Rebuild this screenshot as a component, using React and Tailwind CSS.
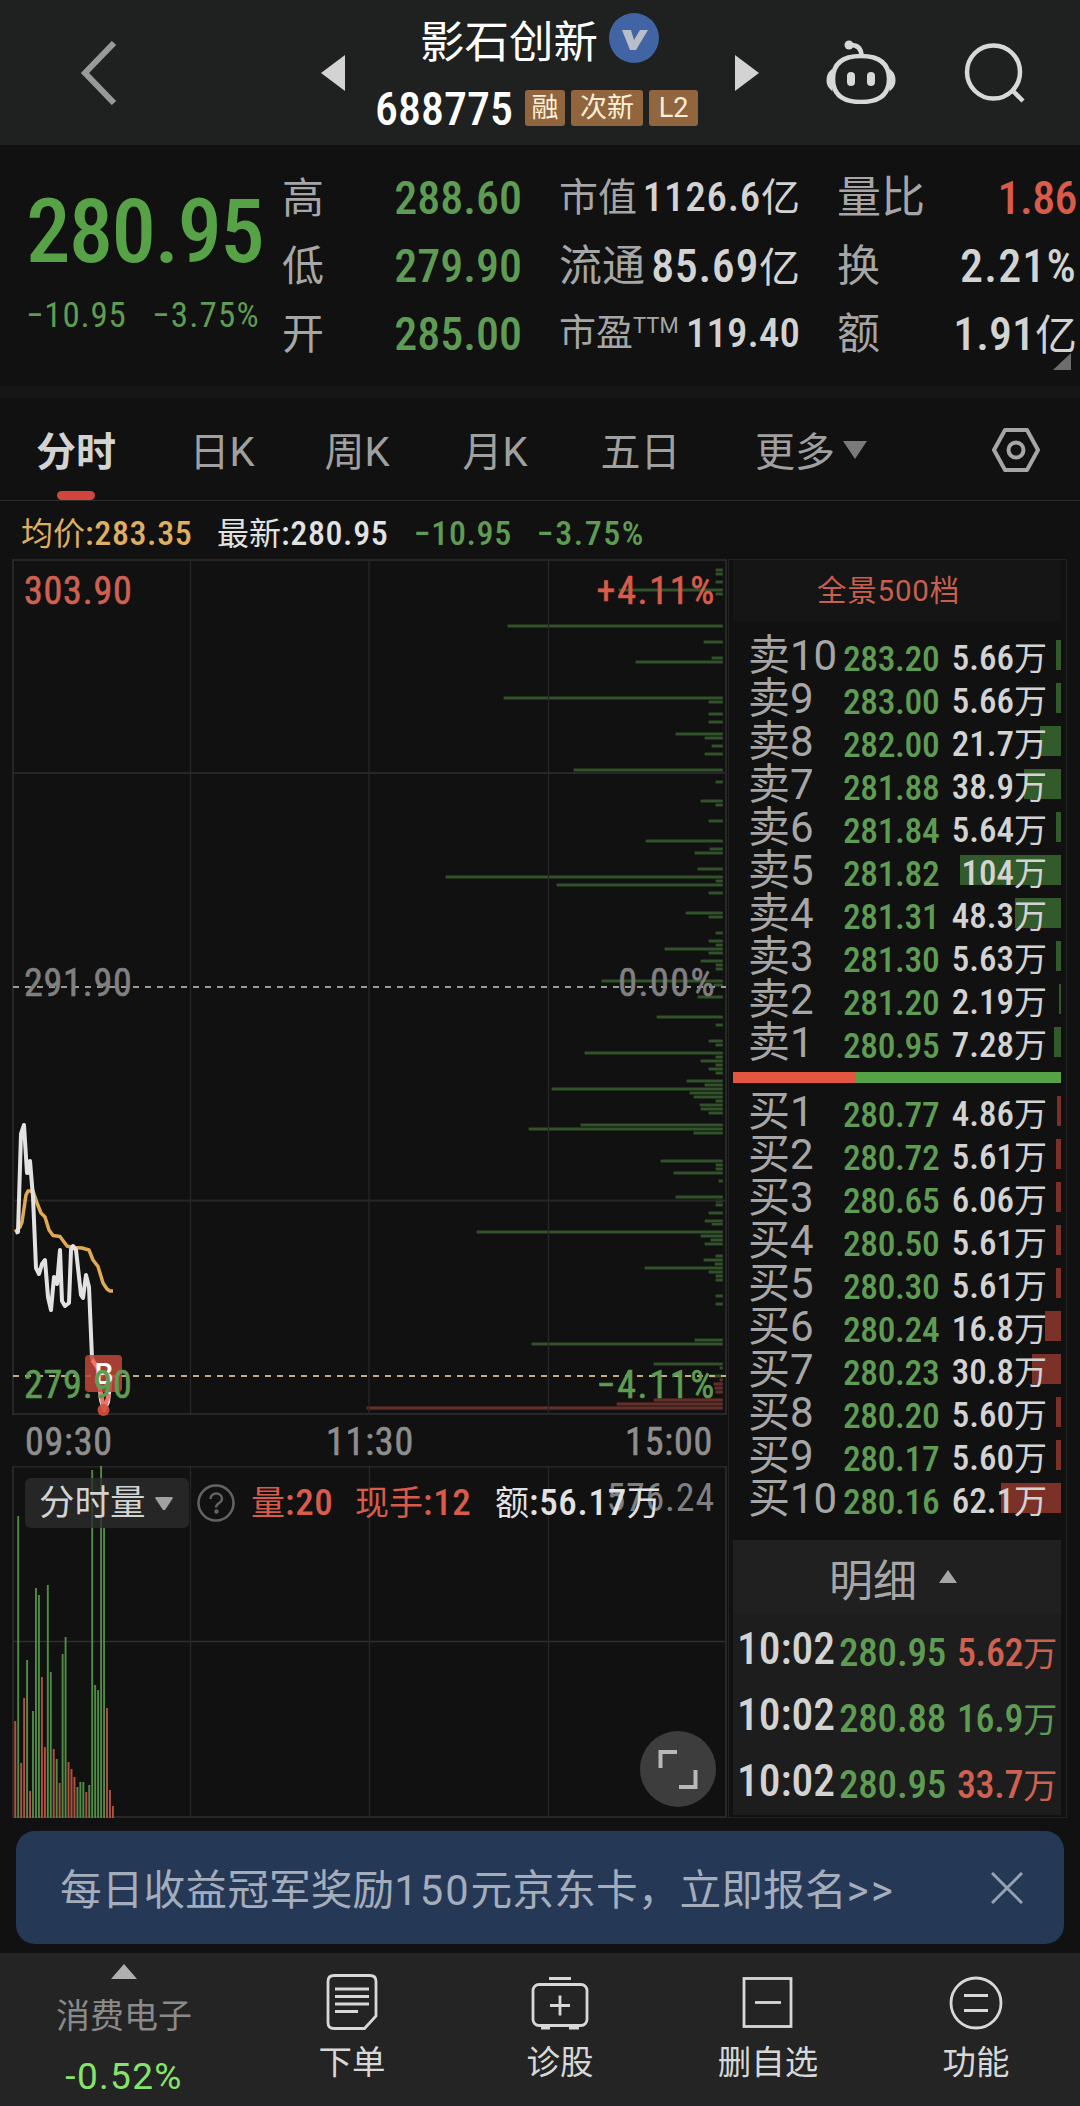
import React, { useState } from 'react';

const sells = [
  { name: '卖10', price: '283.20', vol: '5.66', bar: 5 },
  { name: '卖9', price: '283.00', vol: '5.66', bar: 5 },
  { name: '卖8', price: '282.00', vol: '21.7', bar: 21 },
  { name: '卖7', price: '281.88', vol: '38.9', bar: 37 },
  { name: '卖6', price: '281.84', vol: '5.64', bar: 5 },
  { name: '卖5', price: '281.82', vol: '104', bar: 101 },
  { name: '卖4', price: '281.31', vol: '48.3', bar: 46 },
  { name: '卖3', price: '281.30', vol: '5.63', bar: 5 },
  { name: '卖2', price: '281.20', vol: '2.19', bar: 2 },
  { name: '卖1', price: '280.95', vol: '7.28', bar: 7 },
];

const buys = [
  { name: '买1', price: '280.77', vol: '4.86', bar: 4 },
  { name: '买2', price: '280.72', vol: '5.61', bar: 5 },
  { name: '买3', price: '280.65', vol: '6.06', bar: 5 },
  { name: '买4', price: '280.50', vol: '5.61', bar: 5 },
  { name: '买5', price: '280.30', vol: '5.61', bar: 5 },
  { name: '买6', price: '280.24', vol: '16.8', bar: 16 },
  { name: '买7', price: '280.23', vol: '30.8', bar: 29 },
  { name: '买8', price: '280.20', vol: '5.60', bar: 5 },
  { name: '买9', price: '280.17', vol: '5.60', bar: 5 },
  { name: '买10', price: '280.16', vol: '62.1', bar: 60 },
];

const trades = [
  { time: '10:02', price: '280.95', vol: '5.62', up: true },
  { time: '10:02', price: '280.88', vol: '16.9', up: false },
  { time: '10:02', price: '280.95', vol: '33.7', up: true },
];

const tabs = [
  { name: '日K', width: 'w-[132px]' },
  { name: '周K', width: 'w-[138px]' },
  { name: '月K', width: 'w-[138px]' },
  { name: '五日', width: 'w-[153px]' },
];

// [y, length] of each resting order, drawn leftwards from the right edge
const sellDepth = [
  [570, 7], [574, 7], [582, 7], [590, 104], [594, 7], [626, 215], [642, 19], [658, 11], [662, 87],
  [698, 219], [702, 14], [714, 14], [722, 14], [734, 47], [738, 18], [746, 11], [754, 18], [770, 149],
  [782, 7], [801, 22], [805, 7], [821, 14], [841, 77], [849, 13], [853, 28], [869, 25], [877, 277],
  [881, 7], [885, 166], [893, 14], [913, 37], [917, 14], [933, 7], [941, 14], [945, 7], [949, 58],
  [953, 14], [961, 22], [965, 7], [969, 7], [981, 121], [985, 9], [997, 25], [1017, 66], [1025, 7],
  [1041, 14], [1045, 7], [1053, 138], [1057, 7], [1061, 22], [1065, 7], [1069, 14], [1073, 7],
  [1081, 36], [1085, 18], [1089, 171], [1093, 33], [1097, 29], [1101, 7], [1105, 23], [1109, 22],
  [1113, 14], [1125, 142], [1129, 194], [1133, 29], [1161, 62], [1165, 7], [1169, 7], [1173, 49],
  [1181, 4], [1197, 47], [1201, 7], [1205, 7], [1213, 14], [1221, 18], [1224, 11], [1232, 246],
  [1236, 22], [1240, 12], [1244, 18], [1256, 7], [1260, 19], [1264, 8], [1268, 78], [1272, 14],
  [1276, 7], [1280, 7], [1296, 7], [1304, 7], [1340, 28], [1344, 191], [1364, 69], [1368, 3], [1376, 13],
];

const buyDepth = [[1380, 3], [1384, 9], [1388, 8], [1392, 7], [1400, 69], [1404, 106], [1408, 356]];

const volumes = [
  [97, 1], [302, 0], [55, 1], [120, 1], [158, 0], [27, 1], [107, 0], [230, 0], [223, 0], [141, 1],
  [71, 1], [233, 0], [146, 0], [69, 1], [59, 0], [35, 1], [164, 0], [181, 0], [56, 1], [49, 1],
  [41, 1], [31, 0], [36, 0], [36, 0], [26, 1], [33, 0], [348, 0], [133, 0], [128, 0], [353, 0],
  [290, 0], [110, 1], [28, 1], [12, 1],
];

const Header = () => (
  <header className="flex h-[145px] items-center bg-[#1f2120]">
    <svg className="ml-[79px] h-[64px] w-[38px]" viewBox="0 0 38 64" fill="none" stroke="#999999" strokeWidth="6">
      <path d="M35 2 6 32 35 62" />
    </svg>
    <svg className="ml-[204px] h-[36px] w-[24px]" viewBox="0 0 24 36" fill="#d3d3d3">
      <path d="M24 0v36L0 18z" />
    </svg>
    <div className="h-full w-[390px]">
      <div className="flex items-start pt-[13px] pl-[75px]">
        <h1 className="text-[44.500px] leading-[60px] text-white">影石创新</h1>
        <svg className="ml-[11px] h-[50px] w-[50px]" viewBox="0 0 50 50">
          <circle cx="25" cy="25" r="25" fill="#4064a4" />
          <path d="M13 17h9l3 10 6-10h8L27 37h-6z" fill="#b9bfc8" />
        </svg>
      </div>
      <div className="flex items-center pt-[12px] pl-[30px]">
        <span className="-my-[6px] w-[150px] text-[46px] leading-[60px] font-medium text-white">688775</span>
        <div className="-mt-[2px] flex gap-[6px] text-[27px] leading-[36px] text-[#fff0d8]">
          <span className="w-[40px] rounded-[3px] bg-[#91663e] text-center">融</span>
          <span className="w-[72px] rounded-[3px] bg-[#91663e] text-center">次新</span>
          <span className="w-[49px] rounded-[3px] bg-[#91663e] text-center font-['Roboto',sans-serif]">L2</span>
        </div>
      </div>
    </div>
    <svg className="h-[36px] w-[24px]" viewBox="0 0 24 36" fill="#d3d3d3">
      <path d="M0 0v36l24-18z" />
    </svg>
    <svg className="mt-[-2px] ml-[66px] h-[64px] w-[72px]" viewBox="0 0 72 64" fill="none" stroke="#d8d8d8" strokeWidth="4.500">
      <path d="M36 16c19 0 28 8 28 23S55 62 36 62 8 54 8 39s9-23 28-23z" />
      <path d="M36.500 16c0-7-3-11-11-11" />
      <circle cx="24" cy="5" r="4.500" fill="#d8d8d8" stroke="none" />
      <path d="M6 32c-4 4-4 12 0 16zM66 32c4 4 4 12 0 16z" fill="#d8d8d8" strokeWidth="3" />
      <rect x="22" y="32" width="8" height="14" rx="4" fill="#d8d8d8" stroke="none" />
      <rect x="42" y="32" width="8" height="14" rx="4" fill="#d8d8d8" stroke="none" />
    </svg>
    <svg className="ml-[67px] h-[62px] w-[62px]" viewBox="0 0 62 62" fill="none" stroke="#d8d8d8" strokeWidth="4.500">
      <circle cx="29.500" cy="30" r="26.500" />
      <path d="m49 49 10 10" />
    </svg>
  </header>
);

const Stat = ({ label, sup, value, unit, className = 'text-[#d3d3d3]', labelClass = 'text-[42px]', valueClass = 'text-[46px]', unitClass = 'text-[42px]' }) => (
  <div className="flex h-[68px] items-center justify-between whitespace-nowrap">
    <span className={`flex text-[#a6a6a6] ${labelClass}`}>
      {label}
      {sup && <sup className="top-0 pt-[4px] text-[22px] leading-[32px] font-['Roboto',sans-serif]">{sup}</sup>}
    </span>
    <span className={`${className} ${valueClass} font-medium`}>
      {value}
      {unit && <span className={`font-normal tracking-normal ${unitClass}`}>{unit}</span>}
    </span>
  </div>
);

const Quote = () => (
  <section className="relative flex h-[241px] pt-[19px]">
    <div className="w-[282px] pl-[26px] whitespace-nowrap">
      <div className="pt-[23px] text-[89px] leading-[90px] font-medium tracking-[-1.7px] text-[#57a246]">280.95</div>
      <div className="flex pt-[17px] text-[35px] leading-[44px] tracking-[0.8px] text-[#5f9c53]">
        <span className="w-[126px]">−10.95</span>
        <span className="tracking-[1.200px]">−3.75%</span>
      </div>
    </div>
    <div className="w-[240px]">
      <Stat label="高" value="288.60" className="text-[#5f9c53]" />
      <Stat label="低" value="279.90" className="text-[#5f9c53]" />
      <Stat label="开" value="285.00" className="text-[#5f9c53]" />
    </div>
    <div className="ml-[37px] w-[241px]">
      <Stat label="市值" value="1126.6" unit="亿" labelClass="text-[39px]" valueClass="text-[41px] tracking-[0.7px]" unitClass="text-[39px]" />
      <Stat label="流通" value="85.69" unit="亿" labelClass="text-[43px]" valueClass="text-[46px] tracking-[0.6px]" unitClass="text-[41px]" />
      <Stat label="市盈" sup="TTM" value="119.40" labelClass="text-[37px]" valueClass="text-[41px]" />
    </div>
    <div className="ml-[37px] w-[240px]">
      <Stat label="量比" value="1.86" className="text-[#d95b4a]" labelClass="text-[44px]" valueClass="text-[46px] tracking-[-0.6px]" />
      <Stat label="换" value="2.21%" labelClass="text-[43px]" valueClass="text-[46px] tracking-[1.200px]" />
      <Stat label="额" value="1.91" unit="亿" labelClass="text-[43px]" />
    </div>
    <svg className="absolute top-[208px] left-[1053px] h-[17px] w-[18px]" viewBox="0 0 18 17" fill="#6d6d6d">
      <path d="M18 0v17H0z" />
    </svg>
  </section>
);

const Tabs = () => {
  const [active, setActive] = useState('分时');

  const tabClass = (name) => (active === name ? 'font-bold text-[#d3d3d3]' : 'text-[#a0a0a0]');

  return (
    <nav className="flex h-[103px] items-stretch border-b border-[#2c2c2c] font-['Roboto','Noto_Sans_CJK_SC',sans-serif] text-[40px] leading-[60px]">
      <button onClick={() => setActive('分时')} className={`relative w-[152px] pt-[7px] ${tabClass('分时')}`}>
        分时
        <span className="absolute bottom-0 left-[57px] h-[9px] w-[38px] rounded-full bg-[#d0453c]" />
      </button>
      <div className="w-[4px]" />
      {tabs.map((tab) => (
        <button key={tab.name} onClick={() => setActive(tab.name)} className={`pt-[7px] ${tab.width} ${tabClass(tab.name)}`}>
          {tab.name}
        </button>
      ))}
      <button className="ml-[38px] flex items-center pt-[7px] text-[#a0a0a0]">
        更多
        <svg className="mb-[6px] ml-[8px] h-[18px] w-[24px]" viewBox="0 0 24 18" fill="#7a7a7a">
          <path d="M0 0h24L12 18z" />
        </svg>
      </button>
      <svg className="mt-[26px] ml-[123px] h-[52px] w-[52px]" viewBox="0 0 52 52" fill="none" stroke="#a6a6a6" strokeWidth="4" strokeLinejoin="round">
        <path d="M15 6h22l11 20-11 20H15L4 26z" />
        <circle cx="26" cy="26" r="7.500" />
      </svg>
    </nav>
  );
};

const InfoLine = () => (
  <div className="flex h-[58px] items-center pt-[6px] pl-[21px] text-[34px] leading-[50px] font-medium tracking-[0.6px] whitespace-nowrap">
    <span className="w-[196px] text-[#dfae62]"><span className="text-[32px] font-normal tracking-normal">均价</span>:283.35</span>
    <span className="w-[197px] text-[#e2e2e2]"><span className="text-[32px] font-normal tracking-normal">最新</span>:280.95</span>
    <span className="w-[123px] text-[#5f9c53]">−10.95</span>
    <span className="tracking-[1.500px] text-[#5f9c53]">−3.75%</span>
  </div>
);

const Depth = ({ rows, edge, color }) => (
  <g>
    {rows.map(([y, len]) => (
      <React.Fragment key={y}>
        <rect x={722.7 - len} y={y - 2} width={len} height="4" fill={edge} />
        <rect x={722.7 - len} y={y - 1} width={len} height="2" fill={color} />
      </React.Fragment>
    ))}
  </g>
);

const PriceChart = () => (
  <svg className="block h-[907px] w-[728px]" viewBox="0 559 728 907" fontSize="38" fontWeight="400">
    <Depth rows={sellDepth} edge="#1d3318" color="#35502f" />
    <Depth rows={buyDepth} edge="#43201c" color="#61302a" />
    <g stroke="#272727" strokeWidth="2" fill="none">
      <rect x="13" y="560" width="713" height="854" />
      <path d="M13 773H726M13 1200.500H726" />
      <path d="M190.500 560V1414M369 560V1414M548.500 560V1414" strokeWidth="1.300" />
    </g>
    <path d="M13 987H726" stroke="#9a9a9a" strokeWidth="2" strokeDasharray="6 6" />
    <path d="M13 1376H726" stroke="#c4ac84" strokeWidth="2" strokeDasharray="6 6" />
    <polyline
      fill="none" stroke="#e0a955" strokeWidth="3.500" strokeLinejoin="round"
      points="15,1232 20,1227 22,1222 26,1195 28,1191 33,1191 37,1203 41,1213 45,1217 49,1230 53,1235.500 60,1236.500 67,1246 72,1247.500 82,1248 89,1250 93,1260 98,1266.500 103,1283 107,1289 110,1291 113,1291"
    />
    <polyline
      fill="none" stroke="#e2e2e2" strokeWidth="4" strokeLinejoin="round"
      points="15.500,1232.500 18,1232 21,1134 24,1125 27,1173 28,1173 30,1161 33,1197 36,1268 39,1274 42,1264 45,1260 48,1297 51,1310 54,1277 57,1284 60,1250 62,1301 65,1306 69,1303 71,1250 73,1246 76,1250 81,1295 83,1298 86,1275 89,1287 92,1358 98,1370 101,1400 104,1410 108,1402 111,1376"
    />
    <rect x="85" y="1355" width="37" height="37" rx="4" fill="#c2463a" fillOpacity="0.850" />
    <path d="M92 1360 98 1368M101 1392 104 1410 109 1394" stroke="#ef7564" strokeWidth="4" fill="none" />
    <text x="104" y="1384" fontSize="30" fontWeight="500" fill="#ffffff" textAnchor="middle" className="font-['Roboto',sans-serif]">B</text>
    <circle cx="103.500" cy="1410" r="6" fill="#d4503f" fillOpacity="0.900" />
    <g strokeWidth="0.600" letterSpacing="0.800">
      <text x="24" y="604" fill="#cf6151" stroke="#cf6151">303.90</text>
      <text x="716" y="604" fill="#d95b4a" stroke="#d95b4a" textAnchor="end" letterSpacing="1.700">+4.11%</text>
      <text x="24" y="996" fill="#808080" stroke="#808080">291.90</text>
      <text x="716" y="996" fill="#808080" stroke="#808080" textAnchor="end" letterSpacing="1.500">0.00%</text>
      <text x="24" y="1398" fill="#5f9c53" stroke="#5f9c53">279.90</text>
      <text x="716" y="1398" fill="#5f9c53" stroke="#5f9c53" textAnchor="end" letterSpacing="1.700">−4.11%</text>
      <text x="25" y="1455" fill="#8e8e8e" stroke="#8e8e8e">09:30</text>
      <text x="370" y="1455" fill="#8e8e8e" stroke="#8e8e8e" textAnchor="middle">11:30</text>
      <text x="713" y="1455" fill="#8e8e8e" stroke="#8e8e8e" textAnchor="end">15:00</text>
    </g>
  </svg>
);

const VolumeChart = () => (
  <div className="relative">
    <svg className="block h-[352px] w-[728px]" viewBox="0 1466 728 352">
      <g stroke="#272727" strokeWidth="2" fill="none">
        <rect x="13" y="1466.500" width="713" height="350.500" />
        <path d="M13 1641.500H726" strokeWidth="1.300" stroke="#2f2f2f" />
        <path d="M190.500 1466V1817M369.500 1466V1817M548.500 1466V1817" strokeWidth="1.300" />
      </g>
      {volumes.map(([h, up], i) => (
        <rect key={i} x={14.3 + i * 2.96} y={1818 - h} width="1.900" height={h} fill={up ? '#b5503f' : '#4f8d45'} />
      ))}
    </svg>
    <span className="absolute top-[7px] right-[13px] text-[38px] leading-[50px] tracking-[0.8px] text-[#808080]">576.24</span>
    <div className="absolute inset-x-0 top-[12px] flex h-[50px] items-center text-[37px] leading-[50px] font-medium tracking-[0.7px] whitespace-nowrap">
      <button className="ml-[25px] flex h-[50px] w-[164px] items-center rounded-md bg-[#2c2c2c]/80 pl-[14px] text-[35.500px] font-normal tracking-normal text-[#d3d3d3]">
        分时量
        <svg className="ml-[9px] h-[13px] w-[18px]" viewBox="0 0 18 13" fill="#a0a0a0">
          <path d="M1 0h16l1 1-8 12H8L0 1z" />
        </svg>
      </button>
      <svg className="ml-[8px] h-[38px] w-[38px]" viewBox="0 0 38 38" fill="none" stroke="#636363" strokeWidth="2.500">
        <circle cx="19" cy="19" r="17.500" />
        <path d="M13.500 15c0-7.500 11.500-7 11.500 0 0 4-6 4-6 8.500" />
        <circle cx="19.500" cy="27.500" r="1" />
      </svg>
      <span className="ml-[16px] w-[104px] text-[#d95b4a]"><span className="text-[34px] font-normal tracking-normal">量</span>:20</span>
      <span className="w-[140px] text-[#d95b4a]"><span className="text-[34px] font-normal tracking-normal">现手</span>:12</span>
      <span className="text-[#e2e2e2]"><span className="text-[34px] font-normal tracking-normal">额</span>:56.17<span className="text-[34px] font-normal">万</span></span>
    </div>
    <button className="absolute top-[265px] left-[640px] h-[76px] w-[76px] rounded-full bg-[#3d3d3d]">
      <svg className="h-[76px] w-[76px]" viewBox="0 0 76 76" fill="none" stroke="#b8b8b8" strokeWidth="4">
        <path d="M20.500 37V21H37M39 56h16.500V39" />
      </svg>
    </button>
  </div>
);

const OrderRow = ({ row, sell }) => (
  <div className="relative flex h-[43px] items-center pl-[15px] whitespace-nowrap">
    <div
      className={`absolute top-[6px] right-0 h-[30px] ${sell ? 'bg-[#335a2a]' : 'bg-[#7b3128]'}`}
      style={{ width: row.bar }}
    />
    <span className="w-[95px] font-['Roboto','Noto_Sans_CJK_SC',sans-serif] text-[42px] leading-[43px] text-[#a6a6a6]">{row.name}</span>
    <span className="relative w-[100px] pt-[7px] text-[35.500px] leading-[36px] font-medium tracking-[-0.4px] text-[#5f9c53]">{row.price}</span>
    <span className="relative w-[104px] pt-[7px] text-right text-[35px] leading-[36px] font-medium text-[#d3d3d3]">
      {row.vol}<span className="text-[33px] font-normal">万</span>
    </span>
  </div>
);

const OrderBook = () => (
  <aside className="h-[1259px] w-[339px] border border-[#222222] pl-[4px]">
    <div className="w-[328px]">
      <div className="h-[61px] bg-[#151515] pl-[84px] font-['Roboto','Noto_Sans_CJK_SC',sans-serif] text-[29.500px] leading-[62px] tracking-[0.8px] text-[#c95f4e]">全景500档</div>
      <div className="mt-[13px]">
        {sells.map((row) => <OrderRow key={row.name} row={row} sell />)}
      </div>
      <div className="mt-[8px] flex h-[11px]">
        <div className="w-[123px] bg-[#e45641]" />
        <div className="flex-1 bg-[#57a246]" />
      </div>
      <div className="mt-[7px]">
        {buys.map((row) => <OrderRow key={row.name} row={row} />)}
      </div>
      <div className="mt-[20px] bg-[#1d1d1d]">
        <button className="flex h-[74px] w-full items-center bg-[#202020] pt-[10px] pl-[96px] text-[44px] leading-[60px] text-[#a6a6a6]">
          明细
          <svg className="mb-[12px] ml-[22px] h-[13px] w-[18px]" viewBox="0 0 18 13" fill="#a6a6a6">
            <path d="M9 0l9 13H0z" />
          </svg>
        </button>
        <div className="pt-[3px] leading-[50px]">
          {trades.map((trade, i) => (
            <div key={i} className="flex h-[66px] items-center pl-[4px] whitespace-nowrap">
              <span className="w-[102px] text-[43.500px] font-medium text-[#d3d3d3]">{trade.time}</span>
              <span className="w-[108px] pt-[5px] text-[39px] font-medium tracking-[-0.2px] text-[#5f9c53]">{trade.price}</span>
              <span className={`w-[110px] pt-[6px] text-right text-[38px] font-medium tracking-[-0.3px] ${trade.up ? 'text-[#cf6151]' : 'text-[#5f9c53]'}`}>
                {trade.vol}<span className="text-[34px] font-normal">万</span>
              </span>
            </div>
          ))}
        </div>
      </div>
    </div>
  </aside>
);

const Banner = () => (
  <div className="mx-[16px] mt-[13px] flex h-[113px] items-center rounded-[19px] bg-[#253957] pl-[44px] font-['Roboto','Noto_Sans_CJK_SC',sans-serif] text-[41.700px] text-[#a4adbb]">
    <span className="w-[931px] pt-[8px] tracking-[0.1px] whitespace-nowrap">
      每日收益冠军奖励<span className="tracking-[2px]">150</span>元京东卡，立即报名<span className="tracking-[2.500px]">&gt;&gt;</span>
    </span>
    <svg className="h-[32px] w-[32px]" viewBox="0 0 32 32" stroke="#97a2b3" strokeWidth="3">
      <path d="M1 1l30 30M31 1 1 31" />
    </svg>
  </div>
);

const NavItem = ({ label, children }) => (
  <button className="flex w-[208px] flex-col items-center pt-[20px] text-[33.500px] leading-[48px] text-[#d8d8d8]">
    <svg className="h-[58px] w-[58px]" viewBox="0 0 58 58" fill="none" stroke="#d8d8d8" strokeWidth="2.800">{children}</svg>
    <span className="pt-[8px]">{label}</span>
  </button>
);

const BottomNav = () => (
  <footer className="mt-[9px] flex h-[153px] bg-[#242424]">
    <div className="flex w-[248px] flex-col items-center pt-[11px]">
      <svg className="h-[15px] w-[26px]" viewBox="0 0 26 15" fill="#b0b0b0">
        <path d="M13 0l13 15H0z" />
      </svg>
      <span className="pt-[13px] text-[34px] leading-[48px] text-[#8a8a8a]">消费电子</span>
      <span className="pt-[13px] font-['Roboto',sans-serif] text-[37px] leading-[48px] tracking-[1.300px] text-[#86e36c]">-0.52%</span>
    </div>
    <NavItem label="下单">
      <path d="M11 2.500h36q6 0 6 6V43L41.500 55.500H11q-6 0-6-6V8.500q0-6 6-6z" />
      <path d="M12 16h34M12 23.500h34M12 31h34M12 38.500h23" />
    </NavItem>
    <NavItem label="诊股">
      <rect x="2" y="11.500" width="54" height="41" rx="6" />
      <path d="M18 5.500h22M29 22.500v20M19 32.500h20M10 55h9M38 55h10" />
    </NavItem>
    <NavItem label="删自选">
      <rect x="5" y="5.500" width="47" height="48" />
      <path d="M16 29.500h26" />
    </NavItem>
    <NavItem label="功能">
      <circle cx="29" cy="30" r="25" />
      <path d="M17 22.500h24M17 37.500h24" />
    </NavItem>
  </footer>
);

const App = () => {
  return (
    <div className="h-[2106px] w-[1080px] overflow-hidden bg-[#111111] font-['Roboto_Condensed','Noto_Sans_CJK_SC',sans-serif]">
      <Header />
      <Quote />
      <div className="h-[12px] bg-[#161616]" />
      <Tabs />
      <InfoLine />
      <main className="flex">
        <div className="w-[728px]">
          <PriceChart />
          <VolumeChart />
        </div>
        <OrderBook />
      </main>
      <Banner />
      <BottomNav />
    </div>
  );
};

export default App;
